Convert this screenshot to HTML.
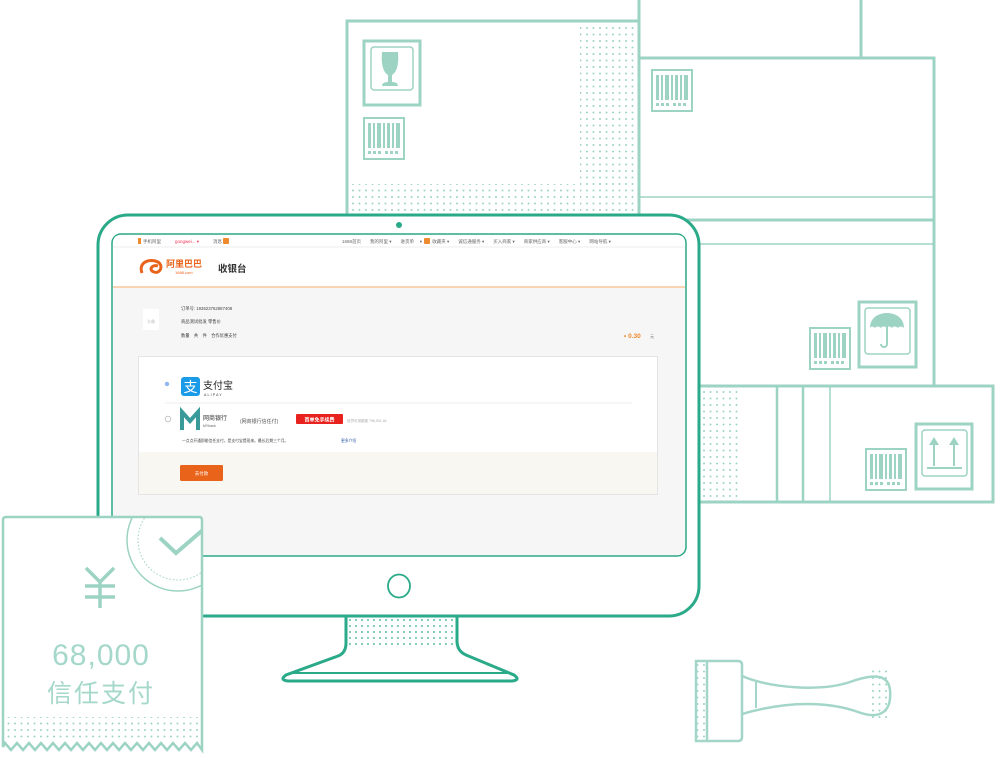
<!DOCTYPE html>
<html><head><meta charset="utf-8"><style>
html,body{margin:0;padding:0;background:#fff;width:996px;height:757px;overflow:hidden}
svg{display:block}
text{font-family:"Liberation Sans","Noto Sans CJK SC",sans-serif}
</style></head><body>
<svg width="996" height="757" viewBox="0 0 996 757" xmlns="http://www.w3.org/2000/svg">
<defs>
<pattern id="dots" x="0" y="0" width="6.5" height="6.5" patternUnits="userSpaceOnUse"><circle cx="2" cy="2" r="1" fill="#9dd3c3"/></pattern>
<pattern id="dotsd" x="0" y="0" width="6" height="6" patternUnits="userSpaceOnUse"><circle cx="2" cy="2" r="0.9" fill="#2aaa88"/></pattern>
<clipPath id="rc"><rect x="3" y="518" width="199" height="240"/></clipPath>
</defs>
<g fill="none" stroke="#9dd3c3" stroke-width="3">
<rect x="580" y="24" width="56" height="190" fill="url(#dots)" stroke="none"/>
<rect x="350" y="184" width="228" height="28" fill="url(#dots)" stroke="none"/>
<path d="M347 214 V21 H639"/>
<path d="M639 0 V214"/>
<path d="M861 0 V57"/>
<path d="M639 58 H934 V386"/>
<path d="M640 197 H934" stroke-width="1.5"/>
<path d="M640 220 H934"/>
<path d="M700 244 H934" stroke-width="1.5"/>
<rect x="700" y="390" width="40" height="110" fill="url(#dots)" stroke="none"/>
<path d="M700 386 H993 V502 H700"/>
<path d="M777 386 V502 M803 386 V502" stroke-width="2.5"/>
<path d="M830 386 V502" stroke-width="1.5"/>
<rect x="364" y="41" width="56" height="64"/>
<rect x="371" y="47" width="42" height="43" rx="3" stroke-width="1.5"/>
<path d="M382 52 H398 C399 64 397 72 392 75 V82 C395 82 398 83 398 86 H382 C382 83 385 82 388 82 V75 C383 72 381 64 382 52Z" fill="#9dd3c3" stroke="none"/>
</g>
<g id="bc" fill="none" stroke="#9dd3c3">
<rect x="364" y="118" width="40" height="41" stroke-width="2"/>
<g fill="#9dd3c3" stroke="none">
<rect x="368" y="123" width="3" height="25"/><rect x="373" y="123" width="2" height="25"/><rect x="377" y="123" width="4" height="25"/><rect x="383" y="123" width="2" height="25"/><rect x="387" y="123" width="3" height="25"/><rect x="392" y="123" width="2" height="25"/><rect x="396" y="123" width="4" height="25"/>
<rect x="368" y="151" width="3" height="3"/><rect x="373" y="151" width="3" height="3"/><rect x="378" y="151" width="3" height="3"/><rect x="385" y="151" width="3" height="3"/><rect x="390" y="151" width="3" height="3"/><rect x="395" y="151" width="3" height="3"/>
</g></g>
<use href="#bc" transform="translate(288,-48)"/>
<use href="#bc" transform="translate(446,210)"/>
<use href="#bc" transform="translate(502,331)"/>
<g fill="none" stroke="#9dd3c3">
<rect x="859" y="302" width="57" height="65" stroke-width="3"/>
<rect x="865" y="308" width="45" height="46" rx="3" stroke-width="1.5"/>
<path d="M870 328 C870 318 878 313 887 313 C896 313 904 318 904 328 C902 326 899 326 898 328 C896 326 893 326 892 328 C890 326 887 326 887 328 C885 326 882 326 881 328 C879 326 876 326 875 328 C873 326 871 326 870 328Z" fill="#9dd3c3" stroke="none"/>
<path d="M887 326 V344 C887 348 881 348 881 344" stroke-width="2"/>
<rect x="916" y="424" width="56" height="65" stroke-width="3"/>
<rect x="922" y="430" width="45" height="46" rx="3" stroke-width="1.5"/>
<path d="M934 444 V466 M954 444 V466 M927 468 H962" stroke-width="2"/>
<path d="M929 445 L934 437 L939 445Z M949 445 L954 437 L959 445Z" fill="#9dd3c3" stroke="none"/>
</g>
<g fill="none" stroke="#a3d6c8" stroke-width="2.5">
<rect x="697" y="662" width="10" height="78" fill="url(#dots)" stroke="none"/>
<rect x="870" y="670" width="20" height="50" fill="url(#dots)" stroke="none"/>
<path d="M696 661 H738 Q742 661 742 665 V737 Q742 741 738 741 H696Z"/>
<path d="M707 661 V741"/>
<path d="M742 676 C770 688 820 692 850 682 C870 675 888 672 890 690 C892 712 880 720 858 712 C830 702 790 700 742 714"/>
<path d="M756 682 V708" stroke-width="2"/>
</g>
<rect x="280" y="498" width="120" height="40" fill="url(#dots)" stroke="none"/>
<g stroke="#2aaa88" fill="none">
<rect x="98" y="215" width="601" height="401" rx="30" fill="#fff" stroke-width="3"/>
<rect x="112" y="234" width="574" height="322" rx="9" fill="#f6f6f6" stroke-width="1.5"/>
<circle cx="399" cy="225" r="3" fill="#2aaa88" stroke="none"/>
<ellipse cx="399" cy="586" rx="11" ry="11.5" stroke-width="1.8"/>
<rect x="348" y="619" width="106" height="27" fill="url(#dotsd)" stroke="none"/>
<path d="M346 617 V643 Q346 653 338 656 L286 675 Q279 680 288 681 H512 Q521 680 514 675 L466 655 Q457 651 457 641 V617" stroke-width="3"/>
<path d="M293 673 H508" stroke-width="2"/>
</g>
<path d="M113 247 V243 Q113 235 121 235 H677 Q685 235 685 243 V287 H113Z" fill="#fff"/>
<line x1="113" y1="247" x2="685" y2="247" stroke="#eee" stroke-width="1"/>
<line x1="113" y1="287" x2="685" y2="287" stroke="#f9c79c" stroke-width="1.5"/>
<g font-size="4.5" fill="#666">
<rect x="138" y="238" width="3" height="6" fill="#f08a2e"/>
<text x="143" y="243">手机阿里</text>
<text x="175" y="243" fill="#e35">gongwei... ▾</text>
<text x="213" y="243">消息</text><rect x="223" y="238" width="6" height="6" rx="1" fill="#f08a2e"/>
<text x="342" y="243">1688首页　　我的阿里 ▾　　进货单 　▾　　 收藏夹 ▾　　诚信通服务 ▾　　买入商家 ▾　　商家供应商 ▾　　客服中心 ▾　　网站导航 ▾</text>
<rect x="424" y="238" width="6" height="6" rx="1" fill="#f08a2e"/>
</g>
<path d="M142 273 C138 262 150 258 158 262 C164 266 160 274 154 272 C148 270 152 264 158 266" fill="none" stroke="#e9631a" stroke-width="3"/>
<text x="166" y="267" font-size="9" font-weight="bold" fill="#e9631a">阿里巴巴</text>
<text x="175" y="274" font-size="4" fill="#e9631a">1688.com</text>
<text x="218" y="272" font-size="9.5" font-weight="bold" fill="#333">收银台</text>
<rect x="143" y="309" width="16" height="21" fill="#fff"/>
<text x="151" y="323" font-size="4" fill="#bbb" text-anchor="middle">头像</text>
<g font-size="4.3" fill="#444">
<text x="181" y="310">订单号: 193623762887408</text>
<text x="181" y="323">商品测试批发 零售价</text>
<text x="181" y="337">数量　共　件　合作优惠支付</text>
</g>
<text x="624" y="338" font-size="6.5" font-weight="bold" fill="#f08a2e">• 0.30</text>
<text x="650" y="338" font-size="4" fill="#666">元</text>
<rect x="138.5" y="356.5" width="519" height="138" fill="#fff" stroke="#e4e4e4"/>
<rect x="139" y="452" width="518" height="42" fill="#f9f7f2"/>
<circle cx="167" cy="384" r="2.2" fill="#8fb6ee"/>
<rect x="181" y="377" width="19" height="19" rx="3" fill="#1a9be8"/>
<text x="190.5" y="392" font-size="14" fill="#fff" text-anchor="middle">支</text>
<text x="203" y="389" font-size="10" fill="#222">支付宝</text>
<text x="204" y="396" font-size="3.5" fill="#333" letter-spacing="1.2">ALIPAY</text>
<line x1="165" y1="403" x2="632" y2="403" stroke="#eee"/>
<circle cx="168" cy="419" r="2.8" fill="none" stroke="#bbb" stroke-width="0.8"/>
<path d="M182 430 V412 L190 421 L198 412 V430" fill="none" stroke="#3a9a9a" stroke-width="4"/>
<text x="203" y="420" font-size="6" fill="#333">网商银行</text>
<text x="203" y="427" font-size="3.5" fill="#666">MYbank</text>
<text x="240" y="423" font-size="5" fill="#555">(网商银行信任付)</text>
<rect x="296" y="414" width="47" height="10" rx="1" fill="#e8231f"/>
<text x="319.5" y="421.5" font-size="5" fill="#fff" text-anchor="middle" font-weight="bold">首单免手续费</text>
<text x="347" y="422" font-size="3.5" fill="#aaa">信贷可用额度 796,901.46</text>
<text x="182" y="442" font-size="3.8" fill="#444">一点点开通即能信任支付，是支付宝提现来。最长后期三个月。</text>
<text x="341" y="442" font-size="3.8" fill="#2a55a8">更多介绍</text>
<rect x="180" y="465" width="43" height="16" rx="1.5" fill="#e9631a"/>
<text x="201.5" y="475" font-size="4.5" fill="#fff" text-anchor="middle">去付款</text>
<g>
<path d="M3 520 Q3 517 6 517 H199 Q202 517 202 520 V750 L197 743 L191 750 L185 743 L179 750 L173 743 L167 750 L161 743 L155 750 L149 743 L143 750 L137 743 L131 750 L125 743 L119 750 L113 743 L107 750 L101 743 L95 750 L89 743 L83 750 L77 743 L71 750 L65 743 L59 750 L53 743 L47 750 L41 743 L35 750 L29 743 L23 750 L17 743 L11 750 L5 743 L3 747Z" fill="#fff" stroke="#9dd3c3" stroke-width="2.5"/>
<rect x="6" y="717" width="192" height="24" fill="url(#dots)"/>
<g clip-path="url(#rc)" fill="none" stroke="#9dd3c3">
<circle cx="178" cy="540" r="51" stroke-width="1.5"/>
<circle cx="178" cy="540" r="40" stroke-width="1" stroke-dasharray="1.5 2"/>
<path d="M160 538 L176 553 L205 528" stroke-width="4"/>
</g>
<path d="M86 568 L100 582 L114 568 M85 586 H115 M85 597 H115 M100 582 V608" fill="none" stroke="#9dd3c3" stroke-width="3.5"/>
<text x="101" y="665" font-size="30" fill="#a5d8ca" text-anchor="middle" letter-spacing="1">68,000</text>
<text x="101" y="702" font-size="25" fill="#a5d8ca" text-anchor="middle" letter-spacing="2">信任支付</text>
</g>
</svg>
</body></html>
